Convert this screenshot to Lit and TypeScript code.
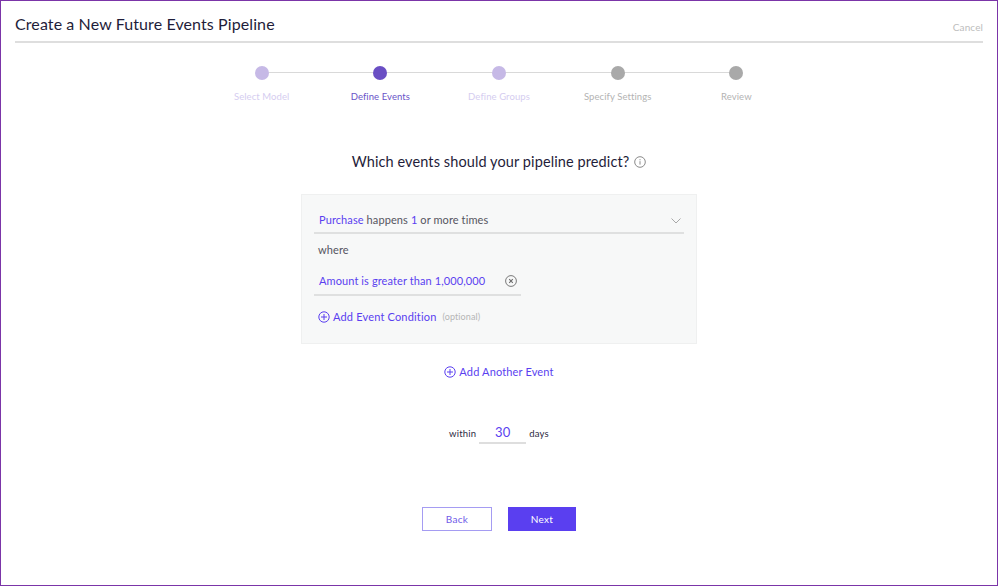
import { LitElement, html, css } from "lit";
import { customElement } from "lit/decorators.js";

const plus = html`<svg class="ic" width="12" height="12" viewBox="0 0 12 12" fill="none" stroke="currentColor" stroke-width="1"><circle cx="6" cy="6" r="5.2"/><path d="M6 3v6M3 6h6"/></svg>`;

const steps = [
  ["Select Model", "done"],
  ["Define Events", "active"],
  ["Define Groups", "done"],
  ["Specify Settings", "todo"],
  ["Review", "todo"],
];

@customElement("app-root")
export class AppRoot extends LitElement {
  static styles = css`
    :host {
      display: block;
      width: 998px;
      height: 586px;
      box-sizing: border-box;
      border: 1px solid #7b35a8;
      background: #fff;
      font-family: "Lato", "Liberation Sans", sans-serif;
      color: #1f1d3a;
      overflow: hidden;
    }
    .page { padding: 0 14px; display: flex; flex-direction: column; }
    .header {
      height: 42px;
      box-sizing: border-box;
      border-bottom: 2px solid #dedede;
      display: flex;
      align-items: center;
      justify-content: space-between;
      padding-top: 8px;
    }
    h1 { margin: -4px 0 0; font-size: 16px; font-weight: 400; letter-spacing: 0.1px; color: #1f1d3a; }
    .cancel { font-size: 10px; color: #bdbdbd; letter-spacing: 0.1px; padding-top: 4px; }
    .stepper {
      position: relative;
      display: grid;
      grid-template-columns: repeat(5, 118.7px);
      align-self: center;
      margin-top: 23px;
    }
    .stepper::before {
      content: "";
      position: absolute;
      left: 59px;
      right: 59px;
      top: 6px;
      height: 1px;
      background: #d9d9d9;
    }
    .step { display: flex; flex-direction: column; align-items: center; position: relative; }
    .dot { width: 14px; height: 14px; border-radius: 50%; }
    .lbl { margin-top: 10px; font-size: 9.5px; line-height: 14px; letter-spacing: 0.08px; }
    .done .dot { background: #c6b9e6; }
    .done .lbl { color: #d5cdf0; }
    .active .dot { background: #6a4fc4; }
    .active .lbl { color: #6a53c8; }
    .todo .dot { background: #a9a9a9; }
    .todo .lbl { color: #b3b3b3; }
    .q {
      display: flex;
      justify-content: center;
      align-items: center;
      gap: 5px;
      margin-top: 48px;
      font-size: 14.5px;
      line-height: 20px;
      letter-spacing: 0.1px;
      color: #1f1d3a;
    }
    .q svg { color: #8a8a8a; }
    .panel {
      align-self: center;
      width: 396px;
      box-sizing: border-box;
      margin-top: 22px;
      background: #f7f8f8;
      border: 1px solid #eff0f0;
      padding: 12px 12px 0 12px;
      height: 150px;
      font-size: 11px;
      letter-spacing: 0.1px;
      color: #55555f;
    }
    .b { color: #5a3ff0; }
    .sel {
      display: flex;
      align-items: center;
      justify-content: space-between;
      height: 27px;
      box-sizing: border-box;
      border-bottom: 2px solid #dfe0e0;
      padding: 0 3px 0 5px;
    }
    .chev { color: #a8a8a8; margin-top: 2px; }
    .where { margin-top: 8px; padding-left: 4px; line-height: 16px; }
    .cond {
      display: flex;
      align-items: center;
      justify-content: space-between;
      width: 207px;
      box-sizing: border-box;
      height: 29px;
      border-bottom: 2px solid #dfe0e0;
      margin-top: 9px;
      padding: 0 4px 0 5px;
      color: #5a3ff0;
    }
    .cond svg { color: #6b6b6b; }
    .add { display: flex; align-items: center; gap: 3px; color: #5a3ff0; font-size: 11px; letter-spacing: 0.18px; }
    .add.c { margin-top: 14px; padding-left: 4px; }
    .opt { color: #b5b5b5; font-size: 9px; margin-left: 3px; letter-spacing: 0.1px; }
    .add.a { justify-content: center; margin-top: 21px; letter-spacing: 0.15px; }
    .within {
      display: flex;
      justify-content: center;
      align-items: center;
      gap: 2px;
      margin-top: 44px;
      font-size: 9.5px;
      letter-spacing: 0.2px;
      color: #2b2a3f;
    }
    .num {
      width: 47px;
      box-sizing: border-box;
      text-align: center;
      margin: 0 1px;
      height: 22px;
      line-height: 20px;
      border-bottom: 2px solid #dedede;
      font-size: 13px;
      color: #5a3ff0;
    }
    .btns { display: flex; justify-content: center; gap: 16px; margin-top: 63px; }
    button {
      font: inherit;
      font-size: 10px;
      letter-spacing: 0.3px;
      height: 24px;
      box-sizing: border-box;
      border-radius: 0;
      padding: 0;
    }
    .back { width: 70px; background: #fff; border: 1px solid #a59cf2; color: #6f5ae8; }
    .next { width: 68px; background: #5a3ff0; border: 1px solid #5a3ff0; color: #fff; }
    svg { display: block; flex: none; }
  `;

  render() {
    return html`<div class="page">
      <div class="header"><h1>Create a New Future Events Pipeline</h1><span class="cancel">Cancel</span></div>
      <div class="stepper">
        ${steps.map(([t, s]) => html`<div class="step ${s}"><div class="dot"></div><div class="lbl">${t}</div></div>`)}
      </div>
      <div class="q">
        <span>Which events should your pipeline predict?</span>
        <svg width="12" height="12" viewBox="0 0 12 12" fill="none" stroke="currentColor" stroke-width="1"><circle cx="6" cy="6" r="5.3"/><path d="M6 5.2v3.4M6 3.2v1.1"/></svg>
      </div>
      <div class="panel">
        <div class="sel">
          <span><span class="b">Purchase</span> happens <span class="b">1</span> or more times</span>
          <svg class="chev" width="10" height="6" viewBox="0 0 10 6" fill="none" stroke="currentColor" stroke-width="1"><path d="M.5.5 5 5 9.5.5"/></svg>
        </div>
        <div class="where">where</div>
        <div class="cond">
          <span>Amount is greater than 1,000,000</span>
          <svg width="12" height="12" viewBox="0 0 12 12" fill="none" stroke="currentColor" stroke-width="0.9"><circle cx="6" cy="6" r="5.4"/><path d="m4.2 4.2 3.6 3.6M7.8 4.2 4.2 7.8" stroke-width="1.1"/></svg>
        </div>
        <div class="add c">${plus}<span>Add Event Condition</span><span class="opt">(optional)</span></div>
      </div>
      <div class="add a">${plus}<span>Add Another Event</span></div>
      <div class="within"><span>within</span><div class="num">30</div><span>days</span></div>
      <div class="btns"><button class="back">Back</button><button class="next">Next</button></div>
    </div>`;
  }
}
